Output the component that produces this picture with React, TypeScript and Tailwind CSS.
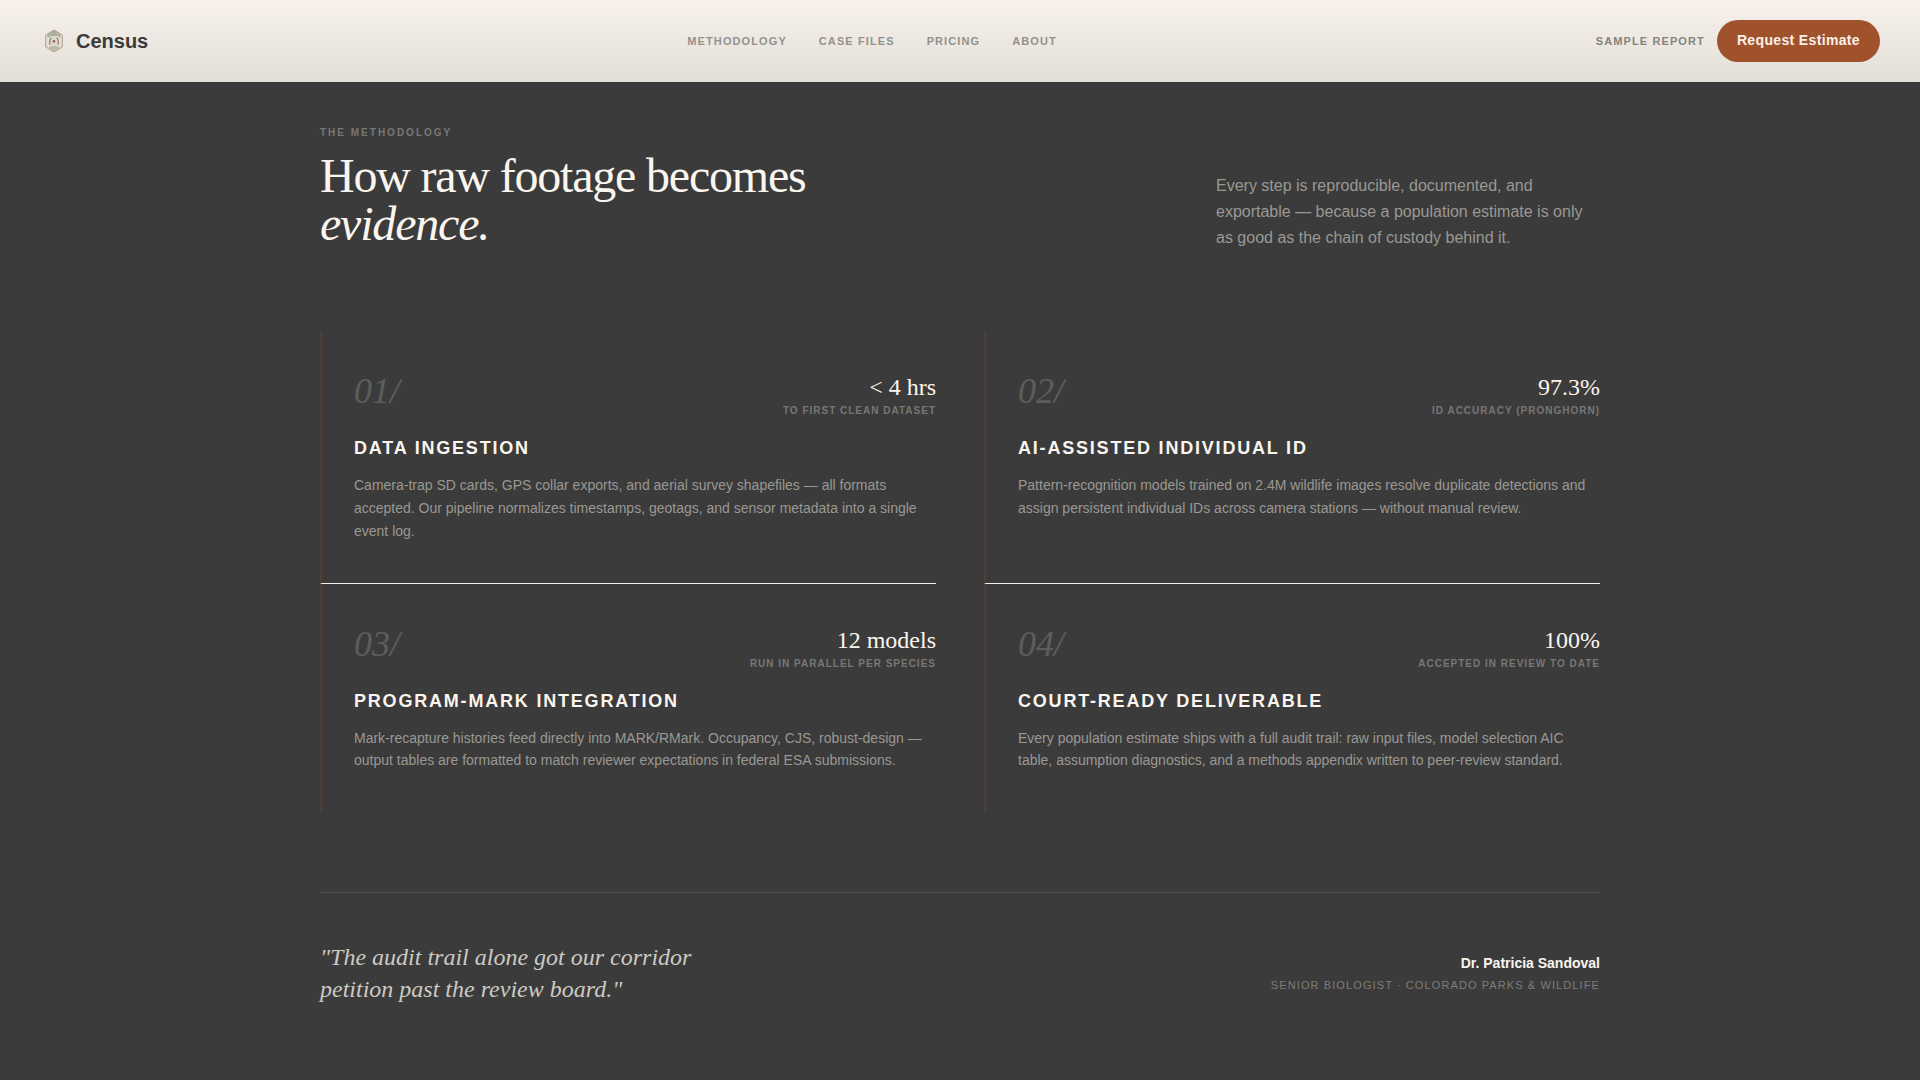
const steps = [
  { n: "01/", stat: "< 4 hrs", label: "To first clean dataset", title: "Data Ingestion", body: "Camera-trap SD cards, GPS collar exports, and aerial survey shapefiles — all formats accepted. Our pipeline normalizes timestamps, geotags, and sensor metadata into a single event log." },
  { n: "02/", stat: "97.3%", label: "ID accuracy (pronghorn)", title: "AI-Assisted Individual ID", body: "Pattern-recognition models trained on 2.4M wildlife images resolve duplicate detections and assign persistent individual IDs across camera stations — without manual review." },
  { n: "03/", stat: "12 models", label: "Run in parallel per species", title: "Program-MARK Integration", body: "Mark-recapture histories feed directly into MARK/RMark. Occupancy, CJS, robust-design — output tables are formatted to match reviewer expectations in federal ESA submissions." },
  { n: "04/", stat: "100%", label: "Accepted in review to date", title: "Court-Ready Deliverable", body: "Every population estimate ships with a full audit trail: raw input files, model selection AIC table, assumption diagnostics, and a methods appendix written to peer-review standard." },
];

function Logo() {
  return (
    <svg width="28" height="28" viewBox="0 0 28 28" fill="none">
      <path d="M14 2.500 22.500 8V20L14 25.500 5.500 20V8Z" fill="#e6dfd2" />
      <path d="M14 3 20.500 7.500V11L17.500 9H10.500L7.500 11V7.500Z" fill="#aeb29b" />
      <path d="M8 20.500 14 18 20 20.500 14 24.500Z" fill="#bcb9a4" />
      <path d="M14 3 22.300 8V20L14 25 5.700 20V8Z" stroke="#b3a088" strokeWidth="1" />
      <path d="M10 19V13a4 4 0 0 1 8 0V19Z" fill="#dcd8ce" />
      <path d="M9.700 17.500V14.500q0-2.500 1.700-3.800M18.300 17.500V14.500q0-2.500-1.700-3.800" stroke="#85867d" strokeWidth="1.300" />
      <circle cx="14" cy="14.200" r="1.200" fill="#b0473f" />
    </svg>
  );
}

export default function App() {
  return (
    <div className="h-[1080px] w-full overflow-hidden bg-[#3b3b3b] font-['Liberation_Sans',sans-serif] text-[#faf5ee]">
      <header className="flex h-[82px] items-center justify-between bg-linear-to-b from-[#f7f1ea] to-[#e2dfd9] px-10">
        <div className="flex items-center gap-2">
          <Logo />
          <span className="text-[20px] leading-7 font-bold text-[#3b3b3b]">Census</span>
        </div>
        <nav className="flex gap-8 text-[11px] font-bold tracking-[0.1em] text-[#93918c] uppercase">
          <a>Methodology</a>
          <a>Case Files</a>
          <a>Pricing</a>
          <a>About</a>
        </nav>
        <div className="flex items-center gap-3">
          <a className="text-[11px] font-bold tracking-[0.1em] text-[#85837e] uppercase">Sample Report</a>
          <button className="h-[42px] rounded-full bg-[#a0522d] px-5 pb-[2px] text-[14px] font-bold tracking-[0.025em] text-[#faf0e6]">Request Estimate</button>
        </div>
      </header>
      <main className="mx-auto w-[1280px] pt-[43px]">
        <div className="flex items-end justify-between">
          <div className="w-[576px] pb-1">
            <p className="text-[10px] leading-4 font-bold tracking-[0.2em] text-[#787776] uppercase">The Methodology</p>
            <h2 className="mt-[11px] font-['Liberation_Serif',serif] text-[48px] leading-[48px] tracking-[-0.025em]">
              How raw footage becomes <em>evidence.</em>
            </h2>
          </div>
          <p className="mb-px w-[384px] text-[16px] leading-[26px] text-[#9a9893]">
            Every step is reproducible, documented, and exportable — because a population estimate is only as good as the chain of custody behind it.
          </p>
        </div>
        <div className="mt-20 grid grid-cols-2 gap-x-12">
          {steps.map((s, i) => (
            <article
              key={s.n}
              className={
                "border-l-2 border-l-[#503f35] pl-8 " +
                (i < 2 ? "h-[252px] border-b border-b-[#f2efea] pt-10" : "h-[228px] pt-[41px]")
              }
            >
              <div className="flex items-start justify-between">
                <span className="pt-px font-['Liberation_Serif',serif] text-[36px] leading-[36px] text-[#5d5d5c] italic">{s.n}</span>
                <div className="text-right">
                  <div className="font-['Liberation_Serif',serif] text-[24px] leading-[30px]">{s.stat}</div>
                  <div className="mt-px text-[10px] leading-[15px] font-bold tracking-[0.1em] text-[#787776] uppercase">{s.label}</div>
                </div>
              </div>
              <h3 className="mt-[17px] text-[18px] leading-[27px] font-bold tracking-[0.1em] uppercase">{s.title}</h3>
              <p className={"mt-3 text-[14px] text-[#9a9893] " + (i < 2 ? "leading-[22.75px]" : "leading-[22px]")}>{s.body}</p>
            </article>
          ))}
        </div>
        <div className="mt-20 flex items-center justify-between border-t border-[#4f4f4e] pt-12">
          <p className="w-[448px] font-['Liberation_Serif',serif] text-[24px] leading-[32px] text-[#cdc9c3] italic">"The audit trail alone got our corridor petition past the review board."</p>
          <div className="text-right">
            <p className="text-[14px] leading-5 font-bold">Dr. Patricia Sandoval</p>
            <p className="mt-1 text-[11px] leading-4 tracking-[0.1em] text-[#7e7d7a] uppercase">Senior Biologist · Colorado Parks &amp; Wildlife</p>
          </div>
        </div>
      </main>
    </div>
  );
}
